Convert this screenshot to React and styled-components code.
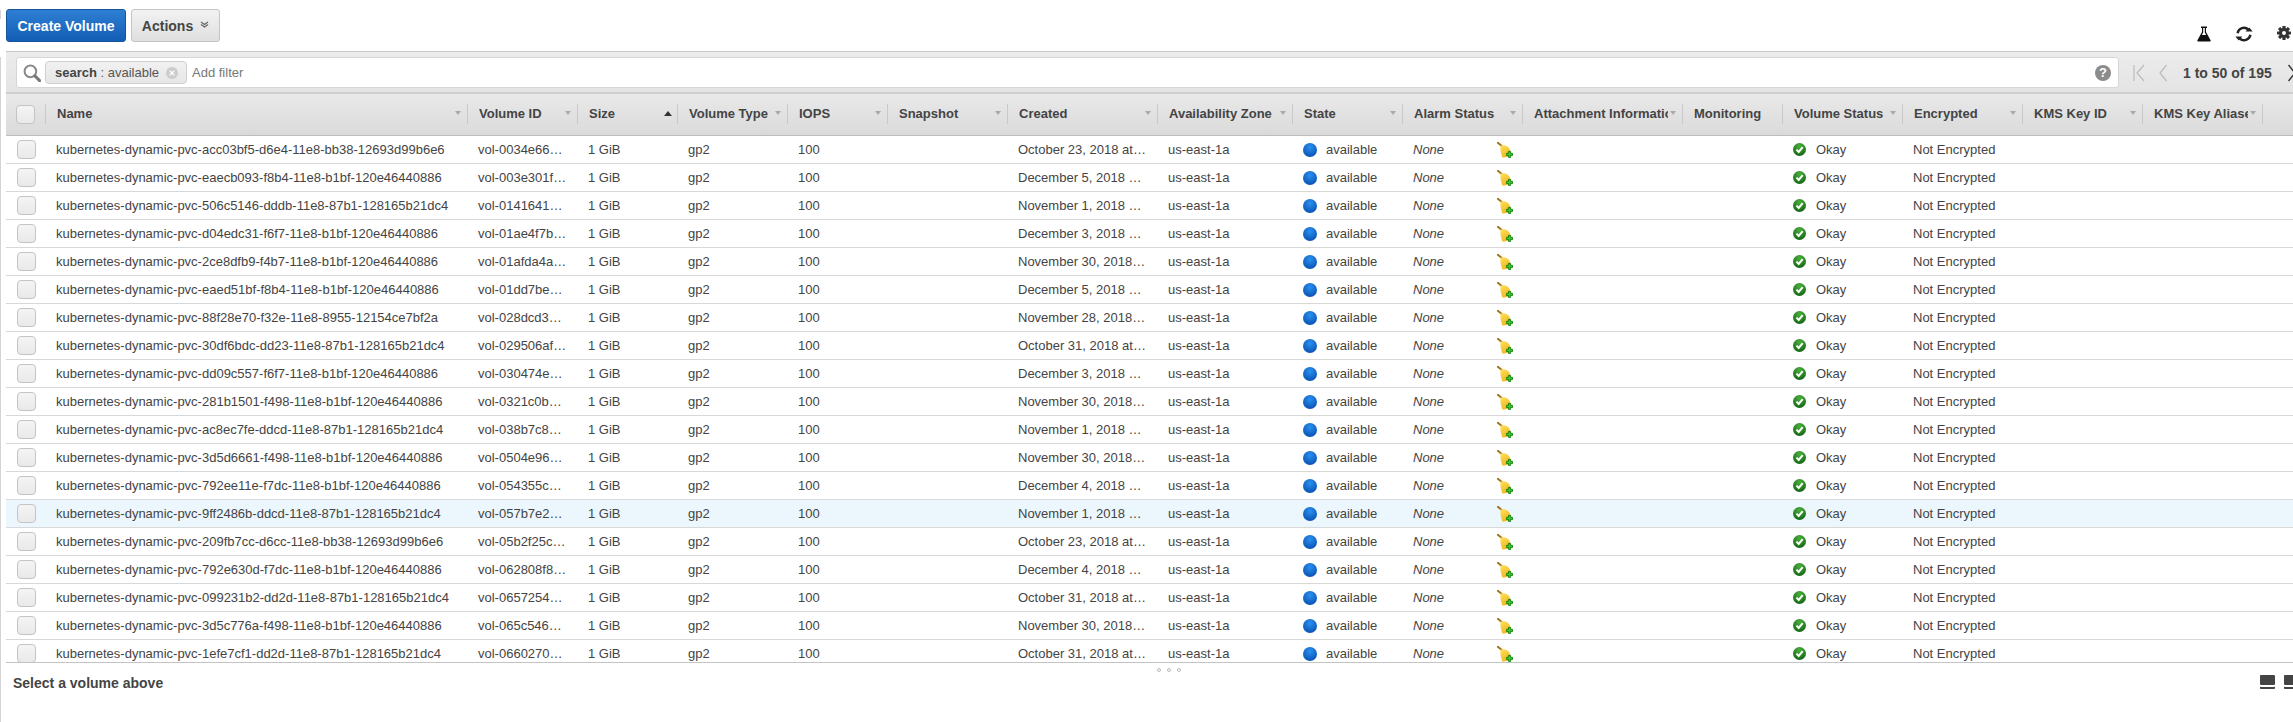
import React from 'react';
import styled, { createGlobalStyle } from 'styled-components';
import { X } from 'lucide-react';

const COLUMNS = [
  { key: 'name', label: 'Name', width: 422 },
  { key: 'id', label: 'Volume ID', width: 110 },
  { key: 'size', label: 'Size', width: 100, sorted: true },
  { key: 'type', label: 'Volume Type', width: 110 },
  { key: 'iops', label: 'IOPS', width: 100 },
  { key: 'snapshot', label: 'Snapshot', width: 120 },
  { key: 'created', label: 'Created', width: 150 },
  { key: 'zone', label: 'Availability Zone', width: 135 },
  { key: 'state', label: 'State', width: 110 },
  { key: 'alarm', label: 'Alarm Status', width: 120 },
  { key: 'attachment', label: 'Attachment Information', width: 160 },
  { key: 'monitoring', label: 'Monitoring', width: 100, noSort: true },
  { key: 'status', label: 'Volume Status', width: 120 },
  { key: 'encrypted', label: 'Encrypted', width: 120 },
  { key: 'kmsId', label: 'KMS Key ID', width: 120 },
  { key: 'kmsAlias', label: 'KMS Key Aliases', width: 120 },
];

const widthOf = (key) => COLUMNS.find((c) => c.key === key).width;

const VOLUMES = [
  ['acc03bf5-d6e4-11e8-bb38-12693d99b6e6', 'vol-0034e66…', 'October 23, 2018 at…'],
  ['eaecb093-f8b4-11e8-b1bf-120e46440886', 'vol-003e301f…', 'December 5, 2018 …'],
  ['506c5146-dddb-11e8-87b1-128165b21dc4', 'vol-0141641…', 'November 1, 2018 …'],
  ['d04edc31-f6f7-11e8-b1bf-120e46440886', 'vol-01ae4f7b…', 'December 3, 2018 …'],
  ['2ce8dfb9-f4b7-11e8-b1bf-120e46440886', 'vol-01afda4a…', 'November 30, 2018…'],
  ['eaed51bf-f8b4-11e8-b1bf-120e46440886', 'vol-01dd7be…', 'December 5, 2018 …'],
  ['88f28e70-f32e-11e8-8955-12154ce7bf2a', 'vol-028dcd3…', 'November 28, 2018…'],
  ['30df6bdc-dd23-11e8-87b1-128165b21dc4', 'vol-029506af…', 'October 31, 2018 at…'],
  ['dd09c557-f6f7-11e8-b1bf-120e46440886', 'vol-030474e…', 'December 3, 2018 …'],
  ['281b1501-f498-11e8-b1bf-120e46440886', 'vol-0321c0b…', 'November 30, 2018…'],
  ['ac8ec7fe-ddcd-11e8-87b1-128165b21dc4', 'vol-038b7c8…', 'November 1, 2018 …'],
  ['3d5d6661-f498-11e8-b1bf-120e46440886', 'vol-0504e96…', 'November 30, 2018…'],
  ['792ee11e-f7dc-11e8-b1bf-120e46440886', 'vol-054355c…', 'December 4, 2018 …'],
  ['9ff2486b-ddcd-11e8-87b1-128165b21dc4', 'vol-057b7e2…', 'November 1, 2018 …', true],
  ['209fb7cc-d6cc-11e8-bb38-12693d99b6e6', 'vol-05b2f25c…', 'October 23, 2018 at…'],
  ['792e630d-f7dc-11e8-b1bf-120e46440886', 'vol-062808f8…', 'December 4, 2018 …'],
  ['099231b2-dd2d-11e8-87b1-128165b21dc4', 'vol-0657254…', 'October 31, 2018 at…'],
  ['3d5c776a-f498-11e8-b1bf-120e46440886', 'vol-065c546…', 'November 30, 2018…'],
  ['1efe7cf1-dd2d-11e8-87b1-128165b21dc4', 'vol-0660270…', 'October 31, 2018 at…'],
];

// Icons

function Flask() {
  return (
    <ToolIcon width="14" height="16" viewBox="0 0 14 16">
      <path d="M4 0.5h6v1.4H9v4.2l4.6 8.2c.3.6 0 1.2-.7 1.2H1.1c-.7 0-1-.6-.7-1.2L5 6.1V1.9H4z" fill="#111" />
      <path d="M6.2 1.9h1.6v4.5l1.3 2.6H4.900l1.3-2.6z" fill="#fff" />
    </ToolIcon>
  );
}

function Refresh() {
  return (
    <ToolIcon width="20" height="16" viewBox="0 0 20 16">
      <path d="M3.6 7.2A6.4 6.4 0 0 1 14.4 3.6" fill="none" stroke="#222" strokeWidth="2.4" />
      <path d="M16.4 8.8A6.4 6.4 0 0 1 5.6 12.4" fill="none" stroke="#222" strokeWidth="2.4" />
      <path d="M11.6 5.6h7l-3.3-4.2z" fill="#222" />
      <path d="M8.4 10.4h-7l3.3 4.2z" fill="#222" />
    </ToolIcon>
  );
}

function Gear() {
  return (
    <ToolIcon width="14" height="14" viewBox="0 0 14 14">
      <g fill="#333">
        <circle cx="7" cy="7" r="5" />
        <rect x="5.4" y="0" width="3.2" height="14" rx=".5" />
        <rect x="5.4" y="0" width="3.2" height="14" rx=".5" transform="rotate(45 7 7)" />
        <rect x="5.4" y="0" width="3.2" height="14" rx=".5" transform="rotate(90 7 7)" />
        <rect x="5.4" y="0" width="3.2" height="14" rx=".5" transform="rotate(135 7 7)" />
      </g>
      <circle cx="7" cy="7" r="2" fill="#fff" />
    </ToolIcon>
  );
}

function SearchGlass() {
  return (
    <ToolIcon width="18" height="18" viewBox="0 0 18 18">
      <circle cx="7.4" cy="7.4" r="5.8" fill="#fff" stroke="#8a8a8a" strokeWidth="2" />
      <path d="M11.8 11.8 16.600 16.600" stroke="#777" strokeWidth="3" strokeLinecap="round" />
    </ToolIcon>
  );
}

function Broom() {
  return (
    <BroomSvg width="16" height="16" viewBox="0 0 16 16">
      <defs>
        <linearGradient id="broom" x1="0" y1="0" x2="0.5" y2="1">
          <stop offset="0%" stopColor="#fde25e" />
          <stop offset="100%" stopColor="#f0b41c" />
        </linearGradient>
      </defs>
      <path d="M0.800 0.800 4.800 4" stroke="#a8701a" strokeWidth="2" strokeLinecap="round" />
      <path d="M3.500 3.500 7.500 3.200C10.500 4 12.500 6 13.500 9L14 14 5.500 15.800C4 12 3 8 3.500 3.500z" fill="url(#broom)" />
      <path d="M11.400 9.400h2.200v1.900h1.900v2.200h-1.900v1.900h-2.200v-1.900H9.500v-2.200h1.900z" fill="#34c934" stroke="#067a06" strokeWidth=".8" />
    </BroomSvg>
  );
}

function OkayIcon() {
  return (
    <OkaySvg width="13" height="13" viewBox="0 0 13 13">
      <defs>
        <radialGradient id="okay" cx="50%" cy="25%" r="80%">
          <stop offset="0%" stopColor="#4caf3c" />
          <stop offset="100%" stopColor="#0c6210" />
        </radialGradient>
      </defs>
      <circle cx="6.500" cy="6.500" r="6.500" fill="url(#okay)" />
      <path d="M3.400 6.600 5.700 9l4-4.800" fill="none" stroke="#fff" strokeWidth="2" />
    </OkaySvg>
  );
}

function HeaderCell({ column }) {
  return (
    <HeadCell $width={column.width}>
      <HeadLabel>{column.label}</HeadLabel>
      {!column.noSort && <SortSlot><Arrow $dark={column.sorted} /></SortSlot>}
    </HeadCell>
  );
}

function VolumeRow({ volume }) {
  const [uuid, id, created, hovered] = volume;

  return (
    <Row $hovered={hovered}>
      <CheckCell><RowCheck /></CheckCell>
      <Cell $width={widthOf('name')}>kubernetes-dynamic-pvc-{uuid}</Cell>
      <Cell $width={widthOf('id')}>{id}</Cell>
      <Cell $width={widthOf('size')}>1 GiB</Cell>
      <Cell $width={widthOf('type')}>gp2</Cell>
      <Cell $width={widthOf('iops')}>100</Cell>
      <Cell $width={widthOf('snapshot')} />
      <Cell $width={widthOf('created')}>{created}</Cell>
      <Cell $width={widthOf('zone')}>us-east-1a</Cell>
      <Cell $width={widthOf('state')}>
        <StateDot />
        available
      </Cell>
      <AlarmCell $width={widthOf('alarm')}>
        <em>None</em>
        <Broom />
      </AlarmCell>
      <Cell $width={widthOf('attachment')} />
      <Cell $width={widthOf('monitoring')} />
      <Cell $width={widthOf('status')}>
        <OkayIcon />
        Okay
      </Cell>
      <Cell $width={widthOf('encrypted')}>Not Encrypted</Cell>
    </Row>
  );
}

function App() {
  return (
    <Page>
      <GlobalStyle />
      <Toolbar>
        <PrimaryButton>Create Volume</PrimaryButton>
        <ActionsButton>
          Actions
          <Chevron width="9" height="7" viewBox="0 0 9 7">
            <path d="M1 1l3.500 2.600L8 1M1 3.400 4.500 6 8 3.400" fill="none" stroke="#666" strokeWidth="1.2" />
          </Chevron>
        </ActionsButton>
        <ToolIcons>
          <Flask />
          <Refresh />
          <Gear />
        </ToolIcons>
      </Toolbar>

      <Main>
        <FilterBar>
          <FilterInput>
            <SearchGlass />
            <Chip>
              <b>search</b>&nbsp;: available
              <ChipClose><X size={8} color="#fff" strokeWidth={3.5} /></ChipClose>
            </Chip>
            <Placeholder>Add filter</Placeholder>
            <HelpIcon>?</HelpIcon>
          </FilterInput>
          <Pager>
            <PagerIcon width="12" height="18" viewBox="0 0 12 18">
              <path d="M1 1v16M11 1 4 9l7 8" fill="none" stroke="#bbb" strokeWidth="1.2" />
            </PagerIcon>
            <PagerIcon width="8" height="18" viewBox="0 0 8 18">
              <path d="M7.500 1 1 9l6.500 8" fill="none" stroke="#bbb" strokeWidth="1.2" />
            </PagerIcon>
            <PagerText>1 to 50 of 195</PagerText>
            <PagerIcon width="8" height="18" viewBox="0 0 8 18">
              <path d="M.5 1 7 9l-6.500 8" fill="none" stroke="#333" strokeWidth="1.4" />
            </PagerIcon>
          </Pager>
        </FilterBar>

        <TableHead>
          <CheckHead><HeadCheck /></CheckHead>
          {COLUMNS.map((column) => <HeaderCell key={column.key} column={column} />)}
        </TableHead>

        <TableBody>
          {VOLUMES.map((volume) => <VolumeRow key={volume[0]} volume={volume} />)}
        </TableBody>
      </Main>

      <DetailPane>
        <Grip><i /><i /><i /></Grip>
        <DetailTitle>Select a volume above</DetailTitle>
        <PaneIcons>
          <PaneIcon />
          <PaneIcon />
        </PaneIcons>
      </DetailPane>
    </Page>
  );
}

/**
 * Styles
 * ------------
 */

const GlobalStyle = createGlobalStyle`
  html, body {
    margin: 0;
    background: #fff;
    overflow: hidden;
  }

  * {
    box-sizing: border-box;
  }
`;

const Page = styled.div`
  position: relative;
  width: 2293px;
  height: 722px;
  overflow: hidden;
  font-family: "Liberation Sans", Arial, sans-serif;
  font-size: 13px;
  color: #444;

  /* faint edge of the side panel, it only shows in the left gutter */
  &::before {
    content: '';
    position: absolute;
    left: 0;
    top: 57px;
    bottom: 0;
    width: 1px;
    background: #d4d4d4;
  }

  &::after {
    content: '';
    position: absolute;
    left: 0;
    top: 10px;
    height: 9px;
    width: 1px;
    background: #d4d4d4;
  }
`;

const Toolbar = styled.div`
  height: 51px;
  padding: 9px 0 0 6px;
  display: flex;
  align-items: flex-start;
  gap: 5px;
`;

const PrimaryButton = styled.button`
  width: 120px;
  height: 33px;
  padding: 0;
  border: 1px solid #15559c;
  border-radius: 3px;
  background: linear-gradient(#2d7fd3, #135eb4);
  color: #fff;
  font: bold 14px "Liberation Sans", Arial, sans-serif;
`;

const ActionsButton = styled.button`
  width: 89px;
  height: 33px;
  padding: 0;
  border: 1px solid #c4c4c4;
  border-radius: 3px;
  background: linear-gradient(#f2f2f2, #dfdfdf);
  color: #444;
  font: bold 14px "Liberation Sans", Arial, sans-serif;
  display: flex;
  align-items: center;
  justify-content: center;
  gap: 7px;
`;

const Chevron = styled.svg`
  margin-top: -2px;
`;

const ToolIcons = styled.div`
  margin-left: auto;
  padding: 17px 2px 0 0;
  display: flex;
  align-items: flex-start;
  gap: 23px;
`;

const ToolIcon = styled.svg`
  display: block;
  flex: none;
`;

const Main = styled.div`
  margin-left: 6px;
`;

const FilterBar = styled.div`
  height: 43px;
  padding: 5px 0 0 10px;
  display: flex;
  background: linear-gradient(#ececec, #e4e4e4);
  border-top: 1px solid #c8c8c8;
  border-bottom: 2px solid #cfcfcf;
`;

const FilterInput = styled.div`
  width: 2103px;
  height: 31px;
  padding: 0 7px 0 6px;
  flex: none;
  display: flex;
  align-items: center;
  background: #fff;
  border: 1px solid #d6d6d6;
  border-radius: 3px;
`;

const Chip = styled.div`
  width: 142px;
  height: 23px;
  margin-left: 4px;
  padding-left: 9px;
  display: flex;
  align-items: center;
  background: linear-gradient(#f1f1f1, #e6e6e6);
  border: 1px solid #cfcfcf;
  border-radius: 4px;
  color: #555;

  b {
    color: #444;
  }
`;

const ChipClose = styled.span`
  width: 12px;
  height: 12px;
  margin-left: 7px;
  display: flex;
  align-items: center;
  justify-content: center;
  border-radius: 50%;
  background: #ccc;
`;

const Placeholder = styled.span`
  margin-left: 5px;
  color: #777;
`;

const HelpIcon = styled.span`
  width: 16px;
  height: 16px;
  margin-left: auto;
  display: flex;
  align-items: center;
  justify-content: center;
  border-radius: 50%;
  background: #8c8c8c;
  color: #fff;
  font-size: 13px;
  font-weight: bold;
`;

const Pager = styled.div`
  height: 31px;
  padding-left: 14px;
  flex: none;
  display: flex;
  align-items: center;
`;

const PagerIcon = styled.svg`
  display: block;
  margin-right: 14px;
`;

const PagerText = styled.span`
  width: 105px;
  margin-left: 2px;
  font-size: 14px;
  font-weight: bold;
  color: #444;
  white-space: nowrap;
`;

const TableHead = styled.div`
  height: 42px;
  padding-bottom: 1px;
  display: flex;
  align-items: center;
  background: linear-gradient(#e9e9e9, #dadada);
  border-bottom: 1px solid #bdbdbd;
`;

const CheckHead = styled.div`
  width: 40px;
  height: 20px;
  padding: 1px 0 0 10px;
  flex: none;
  border-right: 1px solid #c9c9c9;
`;

const checkStyles = `
  display: block;
  width: 19px;
  height: 19px;
  background: linear-gradient(#f4f4f4, #e9e9e9);
  border: 1px solid #c4c4c4;
  border-radius: 4px;
`;

const HeadCheck = styled.span`
  ${checkStyles}
`;

const HeadCell = styled.div`
  width: ${({ $width }) => $width}px;
  height: 20px;
  padding: 0 4px 2px 11px;
  flex: none;
  display: flex;
  align-items: center;
  justify-content: space-between;
  border-right: 1px solid #c9c9c9;
  font-weight: bold;
  color: #444;
`;

const HeadLabel = styled.span`
  overflow: hidden;
  white-space: nowrap;
  flex: 1;
  min-width: 0;
`;

const SortSlot = styled.span`
  width: 10px;
  flex: none;
  display: flex;
  justify-content: center;
`;

const Arrow = styled.span`
  width: 0;
  height: 0;
  border-left: ${({ $dark }) => ($dark ? 4 : 3.5)}px solid transparent;
  border-right: ${({ $dark }) => ($dark ? 4 : 3.5)}px solid transparent;
  ${({ $dark }) => ($dark ? 'border-bottom: 5px solid #333;' : 'border-top: 4px solid #aaa;')}
`;

const TableBody = styled.div`
  height: 527px;
  overflow: hidden;
  border-bottom: 1px solid #c4c4c4;
`;

const Row = styled.div`
  height: 28px;
  display: flex;
  align-items: center;
  background: ${({ $hovered }) => ($hovered ? '#ebf7fd' : '#fff')};
  border-bottom: 1px solid #d8d8d8;
`;

const CheckCell = styled.div`
  width: 40px;
  padding-left: 11px;
  flex: none;
`;

const RowCheck = styled.span`
  ${checkStyles}
`;

const Cell = styled.div`
  width: ${({ $width }) => $width}px;
  padding-left: 10px;
  flex: none;
  display: flex;
  align-items: center;
  white-space: nowrap;
  color: #444;
`;

const AlarmCell = styled(Cell)`
  em {
    width: 84px;
    font-style: italic;
  }
`;

const StateDot = styled.span`
  width: 14px;
  height: 14px;
  margin-right: 9px;
  border-radius: 50%;
  background: radial-gradient(circle at 50% 30%, #2a90f0, #0a55b4 78%);
`;

const BroomSvg = styled.svg`
  display: block;
`;

const OkaySvg = styled.svg`
  display: block;
  margin: -1px 10px 0 0;
`;

const DetailPane = styled.div`
  position: relative;
  height: 59px;
  padding: 12px 0 0 13px;
  display: flex;
  align-items: flex-start;
`;

const Grip = styled.div`
  position: absolute;
  left: 1157px;
  top: 5px;
  display: flex;
  gap: 6px;

  i {
    width: 4px;
    height: 4px;
    border: 1px solid #bbb;
    border-radius: 50%;
  }
`;

const DetailTitle = styled.div`
  font-size: 14px;
  font-weight: bold;
  color: #444;
`;

const PaneIcons = styled.div`
  margin: 0 -6px 0 auto;
  flex: none;
  display: flex;
  gap: 9px;
`;

const PaneIcon = styled.span`
  display: block;
  flex: none;
  width: 15px;
  height: 14px;
  background: #444;
  border-radius: 1px;
  box-shadow: inset 0 -2px 0 #444, inset 0 -4px 0 #fff;
`;

export default App;
